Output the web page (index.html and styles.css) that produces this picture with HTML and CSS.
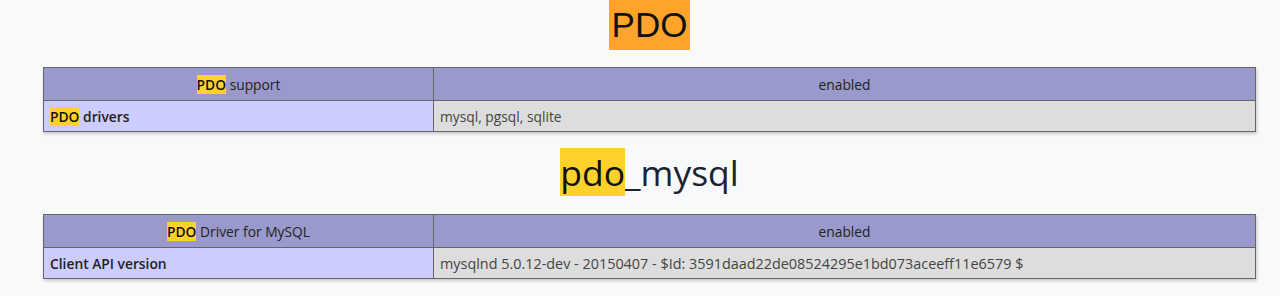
FILE: index.html
```html
<!DOCTYPE html>
<html>
<head>
<meta charset="utf-8">
<link rel="stylesheet" href="styles.css">
</head>
<body>
<div class="page">
  <h1 class="title"><mark class="current">PDO</mark></h1>
  <table class="info">
    <tr class="head"><th class="k"><mark>PDO</mark> support</th><th class="v">enabled</th></tr>
    <tr><td class="e"><mark>PDO</mark> drivers</td><td class="val">mysql, pgsql, sqlite</td></tr>
  </table>
  <h2 class="sub"><mark>pdo</mark>_mysql</h2>
  <table class="info">
    <tr class="head"><th class="k"><mark>PDO</mark> Driver for MySQL</th><th class="v">enabled</th></tr>
    <tr><td class="e">Client API version</td><td class="val wide">mysqlnd 5.0.12-dev - 20150407 - $Id: 3591daad22de08524295e1bd073aceeff11e6579 $</td></tr>
  </table>
</div>
</body>
</html>
```
FILE: styles.css
```css
html, body { margin: 0; padding: 0; }
body {
  background: #f8f9fa;
  font-family: "Open Sans", "Noto Sans", sans-serif;
  color: #222;
  height: 296px;
  overflow: hidden;
}
.page {
  width: 1213px;
  margin-left: 43px;
}
.title {
  margin: 0;
  height: 50px;
  text-align: center;
  font-family: "Liberation Sans", Arial, sans-serif;
  font-weight: normal;
  font-size: 35px;
  line-height: 50px;
}
.title mark.current {
  background: #ffa42b;
  color: #111;
  display: inline-block;
  padding: 0 3px;
  line-height: 50px;
  font-weight: normal;
}
mark {
  background: #ffd22b;
  color: #111;
  font-weight: 600;
}
.info {
  width: 1213px;
  border-collapse: collapse;
  margin-top: 17px;
  box-shadow: 1px 2px 3px rgba(0,0,0,0.2);
  font-size: 13.8px;
}
.info th, .info td {
  border: 1px solid #666;
  height: 31px;
  padding: 0 6px;
  box-sizing: border-box;
}
.info tr.head th {
  background: #9999cc;
  font-weight: normal;
  text-align: center;
  color: #222;
  height: 33px;
}
.info th.k { width: 390px; }
.info td.e {
  background: #ccccff;
  width: 390px;
  font-weight: 600;
  color: #222;
}
.info td.val {
  background: #dddddd;
  color: #444;
}
.info td.wide { font-size: 14.4px; }
.sub {
  margin: 15px 0 0;
  text-align: center;
  font-weight: normal;
  font-size: 35.5px;
  line-height: 50px;
  height: 50px;
  color: #1a2430;
}
.sub mark { font-weight: normal; }
```
